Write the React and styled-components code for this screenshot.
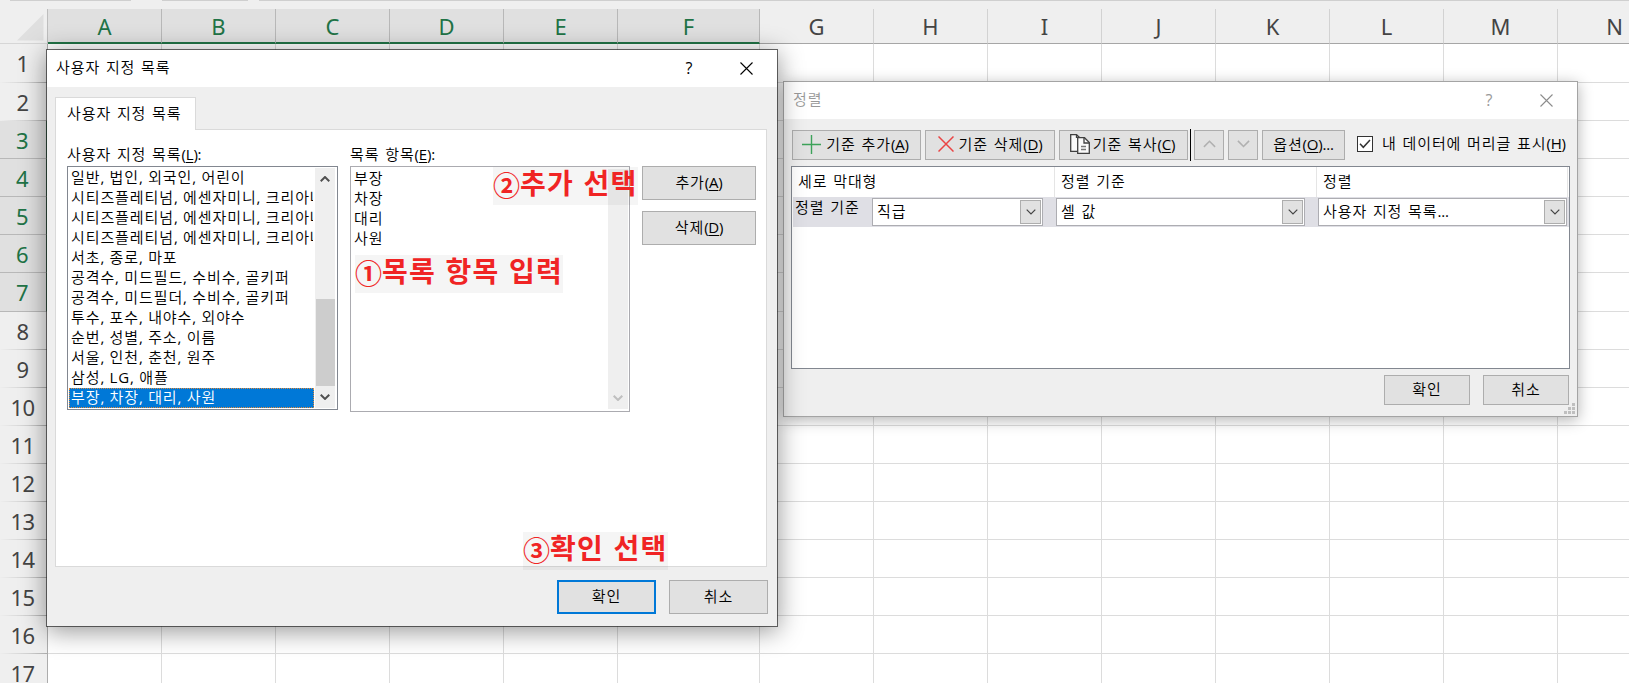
import React, { useState } from "react";
import styled, { createGlobalStyle } from "styled-components";

const columns = [
  { name: "A", width: 114 },
  { name: "B", width: 114 },
  { name: "C", width: 114 },
  { name: "D", width: 114 },
  { name: "E", width: 114 },
  { name: "F", width: 142 },
  { name: "G", width: 114 },
  { name: "H", width: 114 },
  { name: "I", width: 114 },
  { name: "J", width: 114 },
  { name: "K", width: 114 },
  { name: "L", width: 114 },
  { name: "M", width: 114 },
  { name: "N", width: 114 },
];
const rows = Array.from({ length: 17 }, (_, i) => i + 1);

const customLists = [
  "일반, 법인, 외국인, 어린이",
  "시티즈플레티넘, 에센자미니, 크리아나",
  "시티즈플레티넘, 에센자미니, 크리아나",
  "시티즈플레티넘, 에센자미니, 크리아나",
  "서초, 종로, 마포",
  "공격수, 미드필드, 수비수, 골키퍼",
  "공격수, 미드필더, 수비수, 골키퍼",
  "투수, 포수, 내야수, 외야수",
  "순번, 성별, 주소, 이름",
  "서울, 인천, 춘천, 원주",
  "삼성, LG, 애플",
  "부장, 차장, 대리, 사원",
];

const Caption = ({ text, hotkey, tail }) => (
  <span>
    {text}
    <Hotkey>
      (<u>{hotkey}</u>){tail}
    </Hotkey>
  </span>
);

const Chevron = ({ up, size = 10, color = "#505050", weight = 2 }) => (
  <svg width={size} height={size * 0.6} viewBox="0 0 10 6" fill="none">
    <path
      d={up ? "M0.7 5.3L5 1L9.3 5.3" : "M0.7 0.7L5 5L9.3 0.7"}
      stroke={color}
      strokeWidth={weight}
    />
  </svg>
);

const CloseIcon = ({ color }) => (
  <svg width="13" height="13" viewBox="0 0 13 13" fill="none">
    <path d="M0.5 0.5L12.5 12.5M12.5 0.5L0.5 12.5" stroke={color} strokeWidth="1.1" />
  </svg>
);

const PlusIcon = () => (
  <svg width="19" height="19" viewBox="0 0 19 19">
    <path d="M9.5 0V19M0 9.5H19" stroke="#3da25a" strokeWidth="1.4" />
  </svg>
);

const CrossIcon = () => (
  <svg width="16" height="16" viewBox="0 0 16 16">
    <path d="M0.5 0.5L15.5 15.5M15.5 0.5L0.5 15.5" stroke="#ea4444" strokeWidth="1.5" />
  </svg>
);

const CopyIcon = () => (
  <svg width="20" height="20" viewBox="0 0 20 20" fill="none" stroke="#404040" strokeWidth="1.3">
    <path d="M7 17.3H0.7V0.7H6.5L9.5 3.5" fill="#fafafa" />
    <path d="M6.5 0.7V4" />
    <path d="M7.7 3.7H14.5L19.3 8.5V19.3H7.7Z" fill="#fafafa" />
    <path d="M14 3.7V9H19.3" />
    <path d="M11 12.5H16M11 15.5H16" stroke="#777" />
  </svg>
);

const Sheet = () => (
  <Workbook>
    <FormulaEdge>
      <EdgeLine $width={121} />
      <EdgeLine $width={86} />
      <EdgeLine $width={1370} />
    </FormulaEdge>
    <HeaderRow>
      <Corner>
        <svg width="27" height="27" viewBox="0 0 27 27">
          <path d="M26.5 0V26.5H0Z" fill="#dfdfdf" />
        </svg>
      </Corner>
      {columns.map((col, i) => (
        <ColumnHead key={col.name} $width={col.width} $active={i < 6}>
          {col.name}
        </ColumnHead>
      ))}
    </HeaderRow>
    {rows.map((n) => (
      <GridRow key={n} $height={n === 1 || n === 7 ? 39 : 38}>
        <RowHead $active={n > 2 && n < 8}>{n}</RowHead>
        {columns.map((col) => (
          <Cell key={col.name} $width={col.width} />
        ))}
      </GridRow>
    ))}
  </Workbook>
);

const CustomListDialog = () => {
  const [selected, setSelected] = useState(11);
  return (
    <ListWindow>
      <TitleBar>
        <Title>사용자 지정 목록</Title>
        <TitleButton $right={46}>?</TitleButton>
        <TitleButton $right={24}>
          <CloseIcon color="#000" />
        </TitleButton>
      </TitleBar>
      <ListBody>
        <Tab>사용자 지정 목록</Tab>
        <TabPanel>
          <Field $width={271}>
            <FieldLabel>
              <Caption text="사용자 지정 목록" hotkey="L" tail=":" />
            </FieldLabel>
            <ListBox>
              <Options>
                {customLists.map((item, i) => (
                  <Option key={i} $selected={i === selected} onClick={() => setSelected(i)}>
                    {item}
                  </Option>
                ))}
              </Options>
              <ScrollBar>
                <Chevron up />
                <Thumb />
                <Chevron />
              </ScrollBar>
            </ListBox>
          </Field>
          <Field $width={280}>
            <FieldLabel>
              <Caption text="목록 항목" hotkey="E" tail=":" />
            </FieldLabel>
            <EntryBox>
              <Entries>
                <div>부장</div>
                <div>차장</div>
                <div>대리</div>
                <div>사원</div>
              </Entries>
              <ScrollBar $disabled>
                <Chevron color="#bfbfbf" />
              </ScrollBar>
            </EntryBox>
          </Field>
          <SideButtons>
            <Button $width={114} $height={34}>
              <Caption text="추가" hotkey="A" />
            </Button>
            <Button $width={114} $height={34}>
              <Caption text="삭제" hotkey="D" />
            </Button>
          </SideButtons>
        </TabPanel>
        <Actions>
          <Button $width={99} $height={34} $primary>
            확인
          </Button>
          <Button $width={99} $height={34}>
            취소
          </Button>
        </Actions>
      </ListBody>
    </ListWindow>
  );
};

const SortDialog = () => {
  const [hasHeader, setHasHeader] = useState(true);
  return (
    <SortWindow>
      <TitleBar>
        <Title $muted>정렬</Title>
        <TitleButton $right={46} $muted>
          ?
        </TitleButton>
        <TitleButton $right={24}>
          <CloseIcon color="#8c8c8c" />
        </TitleButton>
      </TitleBar>
      <Toolbar>
        <Button $width={129} $height={30} $nudge={2}>
          <PlusIcon />
          <Caption text="기준 추가" hotkey="A" />
        </Button>
        <Button $width={130} $height={30}>
          <CrossIcon />
          <Caption text="기준 삭제" hotkey="D" />
        </Button>
        <Button $width={129} $height={30} $nudge={2} $tight>
          <CopyIcon />
          <Caption text="기준 복사" hotkey="C" />
        </Button>
        <Divider />
        <Button $width={30} $height={30}>
          <Chevron up size={13} color="#b0b0b0" weight={1.2} />
        </Button>
        <Button $width={30} $height={30}>
          <Chevron size={13} color="#b0b0b0" weight={1.2} />
        </Button>
        <Button $width={83} $height={30}>
          <Caption text="옵션" hotkey="O" tail="..." />
        </Button>
        <HeaderOption onClick={() => setHasHeader(!hasHeader)}>
          <CheckBox>
            {hasHeader && (
              <svg width="12" height="10" viewBox="0 0 12 10" fill="none">
                <path d="M1 4.8L4.3 8.3L11 1" stroke="#333" strokeWidth="1.5" />
              </svg>
            )}
          </CheckBox>
          <Caption text="내 데이터에 머리글 표시" hotkey="H" />
        </HeaderOption>
      </Toolbar>
      <Levels>
        <LevelHead>
          <HeadCell $width={263}>세로 막대형</HeadCell>
          <HeadCell $width={262}>정렬 기준</HeadCell>
          <HeadCell $width={251}>정렬</HeadCell>
        </LevelHead>
        <LevelRow>
          <LevelName>정렬 기준</LevelName>
          <Select $width={171} $gap={13}>
            <Value>직급</Value>
            <Arrow>
              <Chevron color="#444" weight={1.2} />
            </Arrow>
          </Select>
          <Select $width={249} $gap={13}>
            <Value>셀 값</Value>
            <Arrow>
              <Chevron color="#444" weight={1.2} />
            </Arrow>
          </Select>
          <Select $width={249} $gap={0}>
            <Value>
              사용자 지정 목록<Hotkey>...</Hotkey>
            </Value>
            <Arrow>
              <Chevron color="#444" weight={1.2} />
            </Arrow>
          </Select>
        </LevelRow>
      </Levels>
      <SortActions>
        <Button $width={86} $height={30}>
          확인
        </Button>
        <Button $width={86} $height={30}>
          취소
        </Button>
      </SortActions>
      <Grip width="11" height="11" viewBox="0 0 11 11" fill="#bfbfbf">
        <path d="M8 0h3v3h-3zM4 4h3v3h-3zM8 4h3v3h-3zM0 8h3v3h-3zM4 8h3v3h-3zM8 8h3v3h-3z" />
      </Grip>
    </SortWindow>
  );
};

const App = () => (
  <Screen>
    <GlobalStyle />
    <Sheet />
    <SortDialog />
    <CustomListDialog />
    <Note $left={493} $top={167} $width={145}>
      <Step>②</Step>추가 선택
    </Note>
    <Note $left={355} $top={255} $width={208}>
      <Step>①</Step>목록 항목 입력
    </Note>
    <Note $left={523} $top={532} $width={145}>
      <Step>③</Step>확인 선택
    </Note>
  </Screen>
);

const GlobalStyle = createGlobalStyle`
  * {
    box-sizing: border-box;
  }
  body {
    margin: 0;
    overflow: hidden;
  }
`;
const Screen = styled.div`
  position: relative;
  width: 1629px;
  height: 683px;
  overflow: hidden;
  background: #fff;
  color: #000;
  font-family: "Open Sans", "Noto Sans CJK KR DemiLight", "Noto Sans CJK KR", sans-serif;
  font-size: 15px;
  line-height: 20px;
  letter-spacing: 0.9px;
  word-spacing: 1px;
  white-space: nowrap;
`;
const Hotkey = styled.span`
  letter-spacing: -0.2px;
  u {
    text-underline-offset: 2px;
    text-decoration-thickness: 1px;
  }
`;

const Workbook = styled.div`
  width: 1644px;
  letter-spacing: 0;
`;
const FormulaEdge = styled.div`
  display: flex;
  height: 9px;
  padding-left: 10px;
  gap: 31px;
  background: #efefef;
`;
const EdgeLine = styled.div`
  width: ${(p) => p.$width}px;
  height: 1px;
  flex: none;
  background: #cfcfcf;
  &:last-child {
    margin-left: -20px;
  }
`;
const HeaderRow = styled.div`
  display: flex;
  height: 35px;
  background: #efefef;
`;
const Corner = styled.div`
  width: 48px;
  flex: none;
  padding: 5px 0 0 17px;
  border-right: 1px solid #bdbdbd;
  border-bottom: 1px solid #d6d6d6;
`;
const ColumnHead = styled.div`
  width: ${(p) => p.$width}px;
  flex: none;
  display: flex;
  align-items: center;
  justify-content: center;
  padding-bottom: ${(p) => (p.$active ? 0 : 1)}px;
  font-family: "Noto Sans", sans-serif;
  font-size: 22px;
  color: ${(p) => (p.$active ? "#217346" : "#444")};
  background: ${(p) => (p.$active ? "#e0e0e0" : "#efefef")};
  border-right: 1px solid ${(p) => (p.$active ? "#b8b8b8" : "#d2d2d2")};
  border-bottom: ${(p) => (p.$active ? "2px solid #217346" : "1px solid #a6a6a6")};
`;
const GridRow = styled.div`
  display: flex;
  height: ${(p) => p.$height}px;
`;
const RowHead = styled.div`
  width: 48px;
  flex: none;
  display: flex;
  align-items: center;
  justify-content: center;
  padding: 0 2px 0 0;
  font-family: "Noto Sans", sans-serif;
  font-size: 22px;
  letter-spacing: -0.6px;
  color: ${(p) => (p.$active ? "#217346" : "#444")};
  background: ${(p) => (p.$active ? "#e0e0e0" : "#efefef")};
  border-right: ${(p) => (p.$active ? "2px solid #217346" : "1px solid #ababab")};
  border-bottom: 1px solid;
  border-image: ${(p) =>
    p.$active
      ? "none"
      : "linear-gradient(to right, #efefef, #cfcfcf 60%, #ababab) 1"};
  border-bottom-color: #b8b8b8;
`;
const Cell = styled.div`
  width: ${(p) => p.$width}px;
  flex: none;
  border-right: 1px solid #dcdcdc;
  border-bottom: 1px solid #dcdcdc;
`;

const Window = styled.div`
  position: absolute;
  display: flex;
  flex-direction: column;
  background: #efefef;
  background-clip: padding-box;
`;
const ListWindow = styled(Window)`
  left: 46px;
  top: 49px;
  width: 732px;
  height: 578px;
  border: 1px solid rgba(40, 40, 40, 0.7);
  box-shadow: 0 4px 24px rgba(0, 0, 0, 0.42);
`;
const SortWindow = styled(Window)`
  left: 783px;
  top: 81px;
  width: 795px;
  height: 336px;
  border: 1px solid #a4a4a4;
  box-shadow: 0 3px 14px rgba(0, 0, 0, 0.3);
`;
const TitleBar = styled.div`
  display: flex;
  align-items: center;
  height: 37px;
  flex: none;
  padding: 0 0 1px 9px;
  background: #fff;
`;
const Title = styled.div`
  flex: 1;
  padding-bottom: 2px;
  color: ${(p) => (p.$muted ? "#999" : "#000")};
`;
const TitleButton = styled.div`
  display: flex;
  justify-content: center;
  min-width: 10px;
  margin-right: ${(p) => p.$right}px;
  font-size: 16px;
  letter-spacing: 0;
  color: ${(p) => (p.$muted ? "#999" : "#000")};
`;

const ListBody = styled.div`
  flex: 1;
  display: flex;
  flex-direction: column;
  padding: 10px 9px 12px 8px;
`;
const Tab = styled.div`
  width: 141px;
  height: 33px;
  flex: none;
  padding: 5px 0 0 11px;
  margin-bottom: -1px;
  z-index: 1;
  background: #fff;
  border: 1px solid #dadada;
  border-bottom: none;
`;
const TabPanel = styled.div`
  display: flex;
  align-items: flex-start;
  width: 712px;
  height: 438px;
  flex: none;
  padding: 14px 0 0 11px;
  background: #fff;
  border: 1px solid #dadada;
`;
const Field = styled.div`
  width: ${(p) => p.$width}px;
  margin-right: 12px;
`;
const FieldLabel = styled.div`
  height: 22px;
`;
const ListBox = styled.div`
  display: flex;
  height: 244px;
  padding: 1px;
  border: 1px solid #828790;
`;
const Options = styled.div`
  flex: 1;
  min-width: 0;
  word-spacing: -0.4px;
`;
const Option = styled.div`
  height: 20px;
  padding-left: 1px;
  margin-right: 1px;
  line-height: 16px;
  overflow: hidden;
  border: 1px ${(p) => (p.$selected ? "dotted #e08a3c" : "solid transparent")};
  background: ${(p) => (p.$selected ? "#0078d7" : "transparent")};
  color: ${(p) => (p.$selected ? "#fff" : "#000")};
`;
const ScrollBar = styled.div`
  display: flex;
  flex-direction: column;
  align-items: center;
  justify-content: ${(p) => (p.$disabled ? "flex-end" : "space-between")};
  width: 20px;
  flex: none;
  margin-right: ${(p) => (p.$disabled ? 0 : 1)}px;
  padding: 8px 0;
  background: #efefef;
`;
const Thumb = styled.div`
  width: 19px;
  height: 88px;
  margin: 117px 0 8px;
  background: #cdcdcd;
`;
const EntryBox = styled.div`
  display: flex;
  justify-content: space-between;
  height: 246px;
  padding: 2px 1px;
  border: 1px solid #ababb0;
`;
const Entries = styled.div`
  margin-top: -1px;
  padding-left: 2px;
`;
const SideButtons = styled.div`
  display: flex;
  flex-direction: column;
  gap: 11px;
  padding-top: 22px;
`;
const Button = styled.button`
  display: flex;
  align-items: center;
  justify-content: center;
  gap: ${(p) => (p.$tight ? 3 : 5)}px;
  width: ${(p) => p.$width}px;
  height: ${(p) => p.$height}px;
  flex: none;
  padding: 0 ${(p) => p.$nudge || 0}px 2px 0;
  border: ${(p) => (p.$primary ? "2px solid #0078d7" : "1px solid #adadad")};
  background: #e1e1e1;
  color: #000;
  font: inherit;
  letter-spacing: inherit;
  word-spacing: inherit;
`;
const Actions = styled.div`
  display: flex;
  justify-content: flex-end;
  gap: 13px;
  margin-top: auto;
`;

const Toolbar = styled.div`
  display: flex;
  align-items: center;
  gap: 4px;
  height: 32px;
  margin: 10px 0 0 8px;
`;
const Divider = styled.div`
  width: 1px;
  height: 32px;
  margin: 0 -1px 0 -2px;
  background: #000;
`;
const HeaderOption = styled.div`
  display: flex;
  align-items: center;
  gap: 9px;
  margin: -4px 0 0 8px;
`;
const CheckBox = styled.span`
  display: flex;
  align-items: center;
  justify-content: center;
  width: 16px;
  height: 16px;
  margin-top: 2px;
  border: 1px solid #333;
  background: #fff;
`;
const Levels = styled.div`
  width: 779px;
  height: 203px;
  margin: 5px 0 0 7px;
  background: #fff;
  border: 1px solid #828790;
`;
const LevelHead = styled.div`
  display: flex;
  height: 30px;
`;
const HeadCell = styled.div`
  width: ${(p) => p.$width}px;
  padding: 4px 0 0 6px;
  border-right: 1px solid #e5e5e5;
`;
const LevelRow = styled.div`
  display: flex;
  align-items: center;
  width: 776px;
  height: 30px;
  margin-left: 1px;
  background: #dfdfe5;
`;
const LevelName = styled.div`
  width: 79px;
  height: 30px;
  padding-left: 2px;
`;
const Select = styled.div`
  display: flex;
  align-items: center;
  justify-content: space-between;
  width: ${(p) => p.$width}px;
  height: 28px;
  flex: none;
  margin-right: ${(p) => p.$gap}px;
  padding: 0 1px 0 4px;
  background: #fff;
  border: 1px solid #adadb2;
`;
const Value = styled.span`
  padding-bottom: 2px;
`;
const Arrow = styled.div`
  display: flex;
  align-items: center;
  justify-content: center;
  width: 21px;
  height: 24px;
  background: #e1e1e1;
  border: 1px solid #adadad;
`;
const SortActions = styled.div`
  display: flex;
  justify-content: flex-end;
  gap: 13px;
  margin: 6px 8px 0 0;
`;
const Grip = styled.svg`
  position: absolute;
  right: 2px;
  bottom: 2px;
`;

const Note = styled.div`
  position: absolute;
  left: ${(p) => p.$left}px;
  top: ${(p) => p.$top}px;
  width: ${(p) => p.$width}px;
  height: 38px;
  display: flex;
  align-items: center;
  padding: 0 0 9px;
  background: rgba(0, 0, 0, 0.04);
  color: #f02424;
  font-family: "Noto Sans CJK KR", sans-serif;
  font-size: 28px;
  font-weight: 700;
  letter-spacing: 1.2px;
  word-spacing: 2px;
`;
const Step = styled.span`
  width: 27px;
  flex: none;
  padding-top: 6px;
  font-size: 27px;
  font-weight: 700;
  letter-spacing: 0;
`;

export default App;
